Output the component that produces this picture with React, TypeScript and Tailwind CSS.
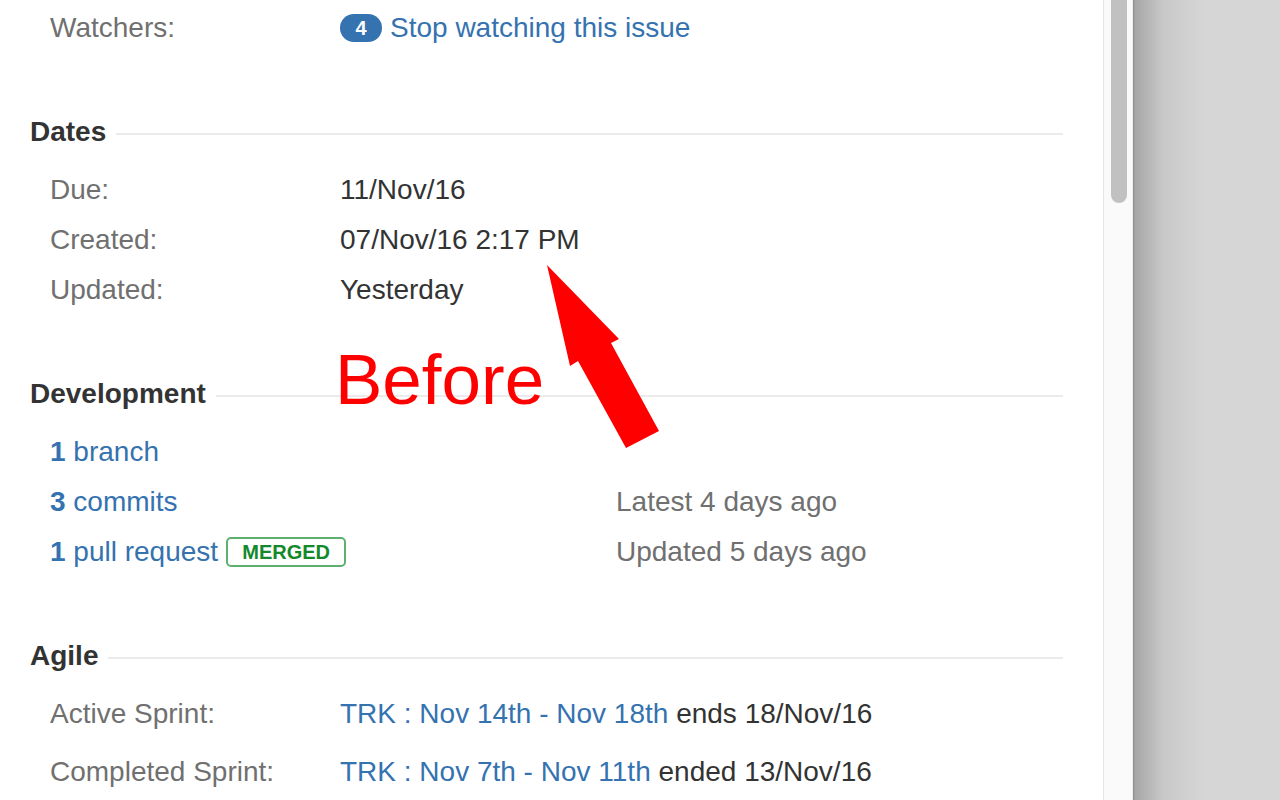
import React from "react";

const LINK = "text-[#3572b0]";

function Header({ title }: { title: string }) {
  return (
    <div className="flex items-center h-[50px] mb-2">
      <span className="font-bold text-[#333333]">{title}</span>
      <div className="flex-1 h-[2px] bg-[#ebebeb] ml-[10px] mt-1" />
    </div>
  );
}

function Row({ label, children, gap = false }: { label: string; children: React.ReactNode; gap?: boolean }) {
  return (
    <div className={`flex h-[50px] items-center pl-5 ${gap ? "mb-2" : ""}`}>
      <div className="w-[290px] text-[#707070] shrink-0">{label}</div>
      <div className="text-[#333333] whitespace-nowrap">{children}</div>
    </div>
  );
}

export default function App() {
  return (
    <div
      className="w-[1280px] h-[800px] overflow-hidden flex text-[28px] leading-[50px]"
      style={{ fontFamily: '"Liberation Sans", Arial, sans-serif' }}
    >
      <div className="relative w-[1103px] shrink-0 bg-white pl-[30px] pr-[40px] pt-[3px]">
        {/* Watchers */}
        <div className="flex h-[50px] items-center pl-5">
          <div className="w-[290px] text-[#707070] shrink-0">Watchers:</div>
          <div className="flex items-center">
            <span className="w-[42px] h-[28px] rounded-full bg-[#3572b0] text-white font-bold text-[20px] leading-none flex items-center justify-center">
              4
            </span>
            <span className={`${LINK} ml-2`}>Stop watching this issue</span>
          </div>
        </div>

        {/* Dates */}
        <div className="mt-[54px]">
          <Header title="Dates" />
          <Row label="Due:">11/Nov/16</Row>
          <Row label="Created:">07/Nov/16 2:17 PM</Row>
          <Row label="Updated:">Yesterday</Row>
        </div>

        {/* Development */}
        <div className="mt-[54px]">
          <Header title="Development" />
          <div className="flex h-[50px] items-center pl-5">
            <span className={LINK}>
              <b>1</b> branch
            </span>
          </div>
          <div className="flex h-[50px] items-center pl-5">
            <div className="w-[566px] shrink-0">
              <span className={LINK}>
                <b>3</b> commits
              </span>
            </div>
            <span className="text-[#707070]">Latest 4 days ago</span>
          </div>
          <div className="flex h-[50px] items-center pl-5">
            <div className="w-[566px] shrink-0 flex items-center">
              <span className={LINK}>
                <b>1</b> pull request
              </span>
              <span className="ml-2 w-[120px] h-[30px] border-2 border-[#5fb06e] rounded-[5px] text-[#14892c] font-bold text-[20px] leading-none flex items-center justify-center">
                MERGED
              </span>
            </div>
            <span className="text-[#707070]">Updated 5 days ago</span>
          </div>
        </div>

        {/* Agile */}
        <div className="mt-[54px]">
          <Header title="Agile" />
          <Row label="Active Sprint:" gap>
            <span className={LINK}>TRK : Nov 14th - Nov 18th</span> ends 18/Nov/16
          </Row>
          <Row label="Completed Sprint:" gap>
            <span className={LINK}>TRK : Nov 7th - Nov 11th</span> ended 13/Nov/16
          </Row>
        </div>

        {/* Annotation overlay */}
        <div className="absolute left-[335px] top-[344px] text-[71px] leading-[72px] text-[#ff0000] whitespace-nowrap">
          Before
        </div>
        <svg className="absolute left-0 top-0 pointer-events-none" width="1103" height="800">
          <polygon
            points="547,265 619,339 611,343 659,431 626,448 578,361 570,366"
            fill="#ff0000"
          />
        </svg>
      </div>

      {/* Scrollbar */}
      <div className="w-[30px] h-full shrink-0 border-l border-r border-l-[#e6e6e6] border-r-[#ececec] bg-[#fafafa]">
        <div className="ml-[7px] w-[16px] h-[203px] rounded-b-[8px] bg-[#c1c1c1]" />
      </div>

      {/* Background beyond window */}
      <div className="flex-1 h-full bg-[linear-gradient(to_right,#8a8a8a_0px,#a6a6a6_2px,#c8c8c8_30px,#d6d6d6_70px)]" />
    </div>
  );
}
